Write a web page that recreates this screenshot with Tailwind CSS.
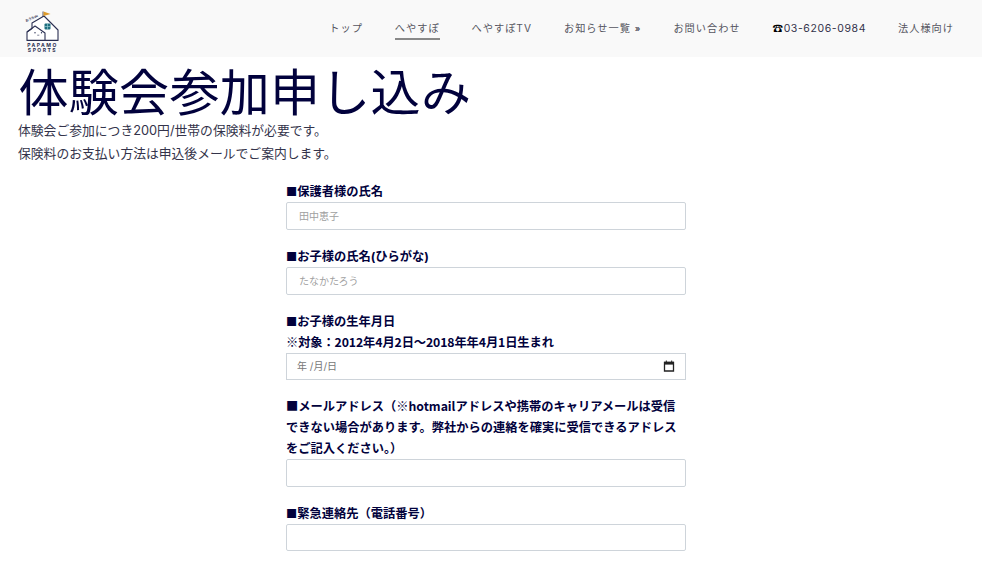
<!DOCTYPE html>
<html lang="ja">
<head>
<meta charset="utf-8">
<title>体験会参加申し込み</title>
<script src="https://cdn.jsdelivr.net/npm/@tailwindcss/browser@4"></script>
</head>
<body class="bg-white text-[#01013c] font-['Inter','Noto_Sans_CJK_JP',sans-serif] overflow-hidden h-[566px]">
<header class="h-[57px] bg-[#f9f9f9] flex items-start justify-between pl-[25px] pr-[28px]">
  <div class="w-[35px] pt-[10px] flex flex-col items-center">
    <svg width="35" height="31" viewBox="0 0 35 31" fill="none" class="block">
      <path d="M7 13L19 6L33 20V30.400H2V22L7 18.500Z" fill="#fff" stroke="#2a2f52" stroke-width="1.100" stroke-linejoin="round"/>
      <path d="M2 22L10 16L20 23V30.400" stroke="#2a2f52" stroke-width="1.100" fill="none" stroke-linejoin="round"/>
      <rect x="19.500" y="13.500" width="6" height="6" rx="1" fill="#1f6f7f"/>
      <path d="M22.500 13.500V19.500M19.500 16.500H25.500" stroke="#a8d5dc" stroke-width=".6"/>
      <path d="M18 1.500V7" stroke="#2a2f52" stroke-width=".8"/>
      <path d="M18.500 1.500L25.500 4L18.500 6Z" fill="#dd9a2a"/>
      <circle cx="10" cy="22.700" r=".7" fill="#2a2f52"/><circle cx="16.500" cy="22.700" r=".7" fill="#2a2f52"/>
      <path d="M12.200 25.200H14.300" stroke="#2a2f52" stroke-width=".6"/>
      <text x="1" y="12" transform="rotate(-24 1 12)" font-size="3.200" font-weight="700" fill="#2a2f52">おうちde</text>
    </svg>
    <div class="text-[5px] leading-[5.500px] font-bold tracking-[1.500px] text-center text-[#2a2f52] whitespace-nowrap mt-[1.500px]">PAPAMO<br>SPORTS</div>
  </div>
  <nav class="flex items-start gap-[32px] pt-[21px] text-[10.200px] leading-[15px] tracking-[1px] text-[#555560]">
    <a class="block">トップ</a>
    <a class="block pb-[2px] border-b-2 border-[#888888]">へやすぽ</a>
    <a class="block">へやすぽTV</a>
    <a class="block">お知らせ一覧 <span class="text-[8.500px] font-bold text-[#555560]">»</span></a>
    <a class="block">お問い合わせ</a>
    <a class="block text-[#33334a] text-[10.500px] tracking-[0.6px]"><span class="text-black">☎</span>03-6206-0984</a>
    <a class="block">法人様向け</a>
  </nav>
</header>
<main class="pl-[18px]">
  <h1 class="text-[50px] leading-[60px] font-normal tracking-[0.3px] mt-[6px] ml-[0.5px] h-[56px]">体験会参加申し込み</h1>
  <p class="text-[12.800px] leading-[23px] text-[#33334a]">体験会ご参加につき200円/世帯の保険料が必要です。</p>
  <p class="text-[12.800px] leading-[23px] text-[#33334a]">保険料のお支払い方法は申込後メールでご案内します。</p>
  <form class="ml-[268px] w-[400px] mt-[16.400px] text-[12.250px] font-bold leading-[21px]">
    <label class="block">■保護者様の氏名</label>
    <input class="block w-full h-[27.600px] px-[12px] text-[10px] font-normal border border-[#ced4da] rounded-[2px] placeholder:text-[#a0a0a0]" placeholder="田中恵子">
    <label class="block mt-[16px]">■お子様の氏名(ひらがな)</label>
    <input class="block w-full h-[27.600px] px-[12px] text-[10px] font-normal border border-[#ced4da] rounded-[2px] placeholder:text-[#a0a0a0]" placeholder="たなかたろう">
    <label class="block mt-[16px]">■お子様の生年月日</label>
    <div class="font-['Noto_Sans_CJK_JP'] tracking-[-0.1px]">※対象：2012年4月2日～2018年年4月1日生まれ</div>
    <div class="flex items-center justify-between h-[27.600px] pl-[10px] pr-[10px] text-[10px] font-normal text-[#777] border border-[#ced4da]">
      <span>年 /月/日</span>
      <svg width="12" height="12" viewBox="0 0 12 12" fill="none">
        <path d="M1.500 2.500H10.500V11H1.500Z" stroke="#222" stroke-width="1.300"/>
        <path d="M1 1.800H11V4.600H1Z" fill="#222"/>
        <path d="M3.300 .5V2M8.700 .5V2" stroke="#222"/>
      </svg>
    </div>
    <label class="block mt-[16px] font-['Noto_Sans_CJK_JP']">■メールアドレス（※hotmailアドレスや携帯のキャリアメールは受信できない場合があります。弊社からの連絡を確実に受信できるアドレスをご記入ください。）</label>
    <input class="block w-full h-[27.600px] px-[12px] text-[10px] font-normal border border-[#ced4da] rounded-[2px]">
    <label class="block mt-[16px]">■緊急連絡先（電話番号）</label>
    <input class="block w-full h-[27.600px] px-[12px] text-[10px] font-normal border border-[#ced4da] rounded-[2px]">
  </form>
</main>
</body>
</html>
